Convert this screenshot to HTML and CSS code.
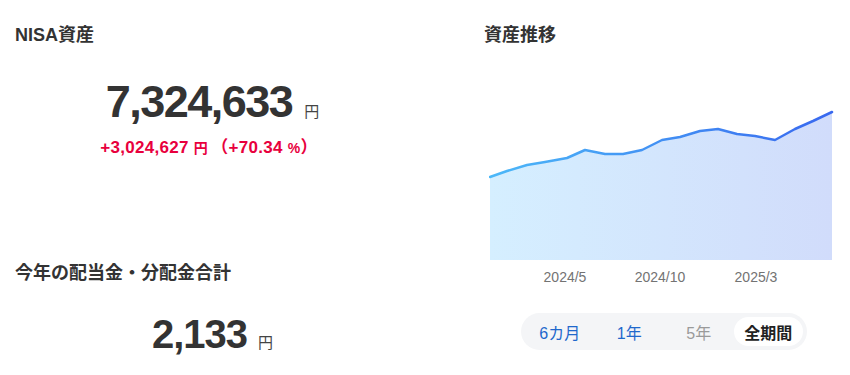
FILE: index.html
```html
<!DOCTYPE html>
<html lang="ja">
<head>
    <meta charset="UTF-8">
    <meta name="viewport" content="width=device-width, initial-scale=1.0">
    <title>NISA資産</title>
    <link rel="stylesheet" href="styles.css">
</head>
<body>
    <div class="page">
        <div class="summary">
            <section class="block">
                <h2 class="block-title">NISA資産</h2>
                <div class="amount">
                    <span class="amount-value">7,324,633</span>
                    <span class="amount-unit">円</span>
                </div>
                <div class="gain">
                    +3,024,627 <span class="gain-unit">円</span>
                    <span class="gain-rate">（+70.34 <span class="gain-unit">%</span>）</span>
                </div>
            </section>

            <section class="block dividend">
                <h2 class="block-title">今年の配当金・分配金合計</h2>
                <div class="amount small">
                    <span class="amount-value">2,133</span>
                    <span class="amount-unit">円</span>
                </div>
            </section>
        </div>

        <div class="history">
            <h2 class="block-title">資産推移</h2>
            <svg class="chart" width="350" height="190" viewBox="0 0 350 190">
                <defs>
                    <linearGradient id="fill" x1="0" y1="0" x2="1" y2="0">
                        <stop offset="0" stop-color="#d5efff"/>
                        <stop offset="1" stop-color="#d1dcfb"/>
                    </linearGradient>
                    <linearGradient id="stroke" x1="0" y1="0" x2="1" y2="0">
                        <stop offset="0" stop-color="#4cb8f8"/>
                        <stop offset="1" stop-color="#3868ef"/>
                    </linearGradient>
                </defs>
                <path d="M1 76 L18 70 L38 64 L56 61 L78 57 L96 49 L116 53 L134 53 L153 49 L173 39 L191 36 L211 30 L229 28 L248 33 L266 35 L286 39 L306 28 L324 20 L343 11 L343 159 L1 159 Z" fill="url(#fill)"/>
                <path d="M1 76 L18 70 L38 64 L56 61 L78 57 L96 49 L116 53 L134 53 L153 49 L173 39 L191 36 L211 30 L229 28 L248 33 L266 35 L286 39 L306 28 L324 20 L343 11" fill="none" stroke="url(#stroke)" stroke-width="2.5" stroke-linejoin="round" stroke-linecap="round"/>
                <g class="axis">
                    <text x="76" y="181">2024/5</text>
                    <text x="171" y="181">2024/10</text>
                    <text x="267" y="181">2025/3</text>
                </g>
            </svg>

            <div class="range">
                <button class="range-item">6カ月</button>
                <button class="range-item">1年</button>
                <button class="range-item disabled">5年</button>
                <button class="range-item active">全期間</button>
            </div>
        </div>
    </div>
</body>
</html>
```

FILE: styles.css
```css
* {
    margin: 0;
    padding: 0;
    box-sizing: border-box;
}

body {
    background-color: #fff;
    color: #333;
    font-family: "Liberation Sans", "Noto Sans CJK JP", sans-serif;
}

.page {
    display: grid;
    grid-template-columns: 425px 1fr;
    width: 850px;
    height: 375px;
}

.block-title {
    font-size: 18px;
    line-height: 26px;
    font-weight: bold;
    color: #333;
}

.summary {
    padding: 22px 0 0 15px;
}

.summary .block-title {
    margin-right: 15px;
}

.amount {
    display: flex;
    justify-content: center;
    align-items: baseline;
    gap: 12px;
    margin: 29px 15px 0 0;
}

.amount-value {
    font-size: 45px;
    line-height: 50px;
    font-weight: bold;
    letter-spacing: -1.5px;
    color: #333;
}

.amount-unit {
    font-size: 15px;
    color: #444;
}

.amount.small {
    margin-top: 26px;
}

.amount.small .amount-value {
    font-size: 40px;
    line-height: 44px;
    letter-spacing: -1px;
}

.amount.small .amount-unit {
    margin-left: -1px;
}

.gain {
    margin: 10px 22px 0 0;
    text-align: center;
    font-size: 17px;
    line-height: 22px;
    font-weight: bold;
    letter-spacing: 0.3px;
    color: #e8003d;
}

.gain-unit {
    font-size: 14px;
}

.gain-rate {
    margin-left: -2px;
}

.dividend {
    margin-top: 101px;
}

.history {
    padding: 22px 0 0 59px;
}

.chart {
    display: block;
    margin: 53px 0 0 5px;
}

.axis text {
    font-family: "Liberation Sans", sans-serif;
    font-size: 14px;
    fill: #737373;
    text-anchor: middle;
}

.range {
    display: flex;
    width: 286px;
    height: 37px;
    margin: 22px 0 0 37px;
    padding: 4px;
    border-radius: 19px;
    background-color: #f4f5f7;
}

.range-item {
    flex: 1;
    border: none;
    border-radius: 15px;
    background: none;
    font-family: "Liberation Sans", "Noto Sans CJK JP", sans-serif;
    font-size: 16px;
    color: #1f68cc;
    cursor: pointer;
}

.range-item.disabled {
    color: #9a9a9a;
}

.range-item.active {
    background-color: #fff;
    color: #222;
    font-weight: bold;
}
```
